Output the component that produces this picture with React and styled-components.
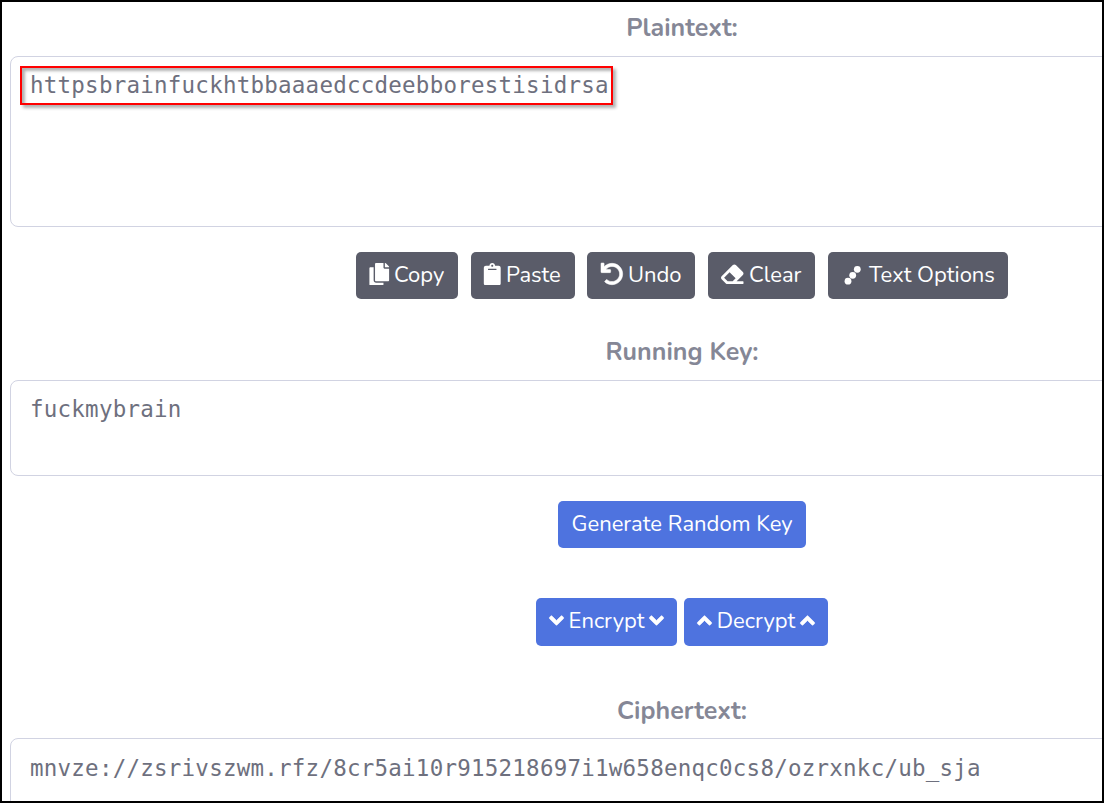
import React from "react";
import styled, { createGlobalStyle } from "styled-components";
import { FaCopy, FaClipboard, FaUndo, FaEraser, FaAngleDown, FaAngleUp } from "react-icons/fa";

const GlobalStyle = createGlobalStyle`
  *, *::before, *::after { box-sizing: border-box; }
  body { margin: 0; background: #fff; overflow: hidden; }
`;

const Frame = styled.main`
  width: 1104px;
  height: 803px;
  border: 2px solid #000;
  background: #fff;
  overflow: hidden;
  font-family: Nunito, Lato, sans-serif;
`;

const Form = styled.div`
  width: 1344px;
  margin-left: 8px;
  display: flex;
  flex-direction: column;
`;

const Label = styled.h2`
  margin: 0;
  height: ${(p) => p.$height}px;
  padding-top: ${(p) => p.$top}px;
  line-height: 32px;
  font-size: 25px;
  font-weight: 700;
  letter-spacing: 0.03px;
  text-align: center;
  color: #858796;
`;

const TextBox = styled.div`
  height: ${(p) => p.$height}px;
  padding: ${(p) => p.$top ?? 9}px 9px 0;
  border: 1px solid #d1d3e2;
  border-radius: 8px;
  font-family: Consolas, "DejaVu Sans Mono", monospace;
  font-size: 22.5px;
  letter-spacing: 0.235px;
  line-height: 33px;
  color: #6e707e;
  white-space: pre;
`;

const Value = styled.span`
  display: inline-block;
  height: 39px;
  padding: 0 7px;
  border: 3px solid transparent;
`;

const MarkedValue = styled(Value)`
  width: 593px;
  border: 2px solid #f00;
  padding: 1px 8px;
  box-shadow: 3px 3px 3px rgba(0, 0, 0, 0.3), inset 3px 3px 3px rgba(0, 0, 0, 0.3);
`;

const Row = styled.div`
  display: flex;
  justify-content: center;
  gap: ${(p) => p.$gap}px;
  margin-top: ${(p) => p.$top}px;
`;

const Button = styled.button`
  display: flex;
  align-items: center;
  justify-content: center;
  gap: ${(p) => p.$gap ?? 5}px;
  width: ${(p) => p.$width}px;
  height: ${(p) => p.$height ?? 47}px;
  padding: 0 0 ${(p) => p.$bottom ?? 1}px;
  border: 0;
  border-radius: 5px;
  background: ${(p) => (p.$primary ? "#4e73df" : "#5a5c69")};
  color: #fff;
  font: 400 22px/34px Nunito, Lato, sans-serif;
  white-space: nowrap;

  svg { flex: none; margin-top: -2px; }
`;

const ToolButton = styled(Button)`
  justify-content: flex-start;
  padding-left: 13px;
  margin-right: ${(p) => p.$after ?? 0}px;
`;

const Glyph = styled.span`
  display: flex;
  flex: none;
  justify-content: ${(p) => p.$align ?? "center"};
  width: ${(p) => p.$width}px;
`;

const Angle = styled(Glyph)`
  svg { margin-top: 0; stroke: #fff; stroke-width: 14px; }
`;

const BoldGlyph = styled(Glyph)`
  svg { stroke: #fff; stroke-width: 12px; overflow: visible; }
`;

const DotsIcon = () => (
  <svg width="18" height="22" viewBox="0 0 18 22" fill="#fff">
    <circle cx="5" cy="18.2" r="3.4" />
    <circle cx="9.7" cy="12.3" r="3.4" />
    <circle cx="14.3" cy="6.3" r="3.4" />
  </svg>
);

export default function App() {
  return (
    <>
      <GlobalStyle />
      <Frame>
        <Form>
          <Label $height={54} $top={10}>Plaintext:</Label>
          <TextBox $height={171}>
            <MarkedValue>httpsbrainfuckhtbbaaaedccdeebborestisidrsa</MarkedValue>
          </TextBox>
          <Row $top={25} $gap={0}>
            <ToolButton $width={102} $after={13}><Glyph $width={20}><FaCopy size={22.5} /></Glyph>Copy</ToolButton>
            <ToolButton $width={104} $after={12}><Glyph $width={17}><FaClipboard size={22.5} /></Glyph>Paste</ToolButton>
            <ToolButton $width={108} $after={13}><BoldGlyph $width={23}><FaUndo size={22} /></BoldGlyph>Undo</ToolButton>
            <ToolButton $width={107} $after={13}><Glyph $width={23} $align="flex-start"><FaEraser size={22.5} /></Glyph>Clear</ToolButton>
            <ToolButton $width={180} $gap={7}><Glyph $width={21}><DotsIcon /></Glyph>Text Options</ToolButton>
          </Row>
          <Label $height={81} $top={37}>Running Key:</Label>
          <TextBox $height={96}><Value>fuckmybrain</Value></TextBox>
          <Row $top={25} $gap={0}>
            <Button $primary $width={248}>Generate Random Key</Button>
          </Row>
          <Row $top={50} $gap={7}>
            <Button $primary $width={141} $height={48} $gap={4.5} $bottom={3}>
              <Angle $width={15}><FaAngleDown size={23} /></Angle>Encrypt<Angle $width={15}><FaAngleDown size={23} /></Angle>
            </Button>
            <Button $primary $width={144} $height={48} $gap={4.5} $bottom={3}>
              <Angle $width={15}><FaAngleUp size={23} /></Angle>Decrypt<Angle $width={15}><FaAngleUp size={23} /></Angle>
            </Button>
          </Row>
          <Label $height={92} $top={49}>Ciphertext:</Label>
          <TextBox $height={96} $top={10}>
            <Value>mnvze://zsrivszwm.rfz/8cr5ai10r915218697i1w658enqc0cs8/ozrxnkc/ub_sja</Value>
          </TextBox>
        </Form>
      </Frame>
    </>
  );
}
